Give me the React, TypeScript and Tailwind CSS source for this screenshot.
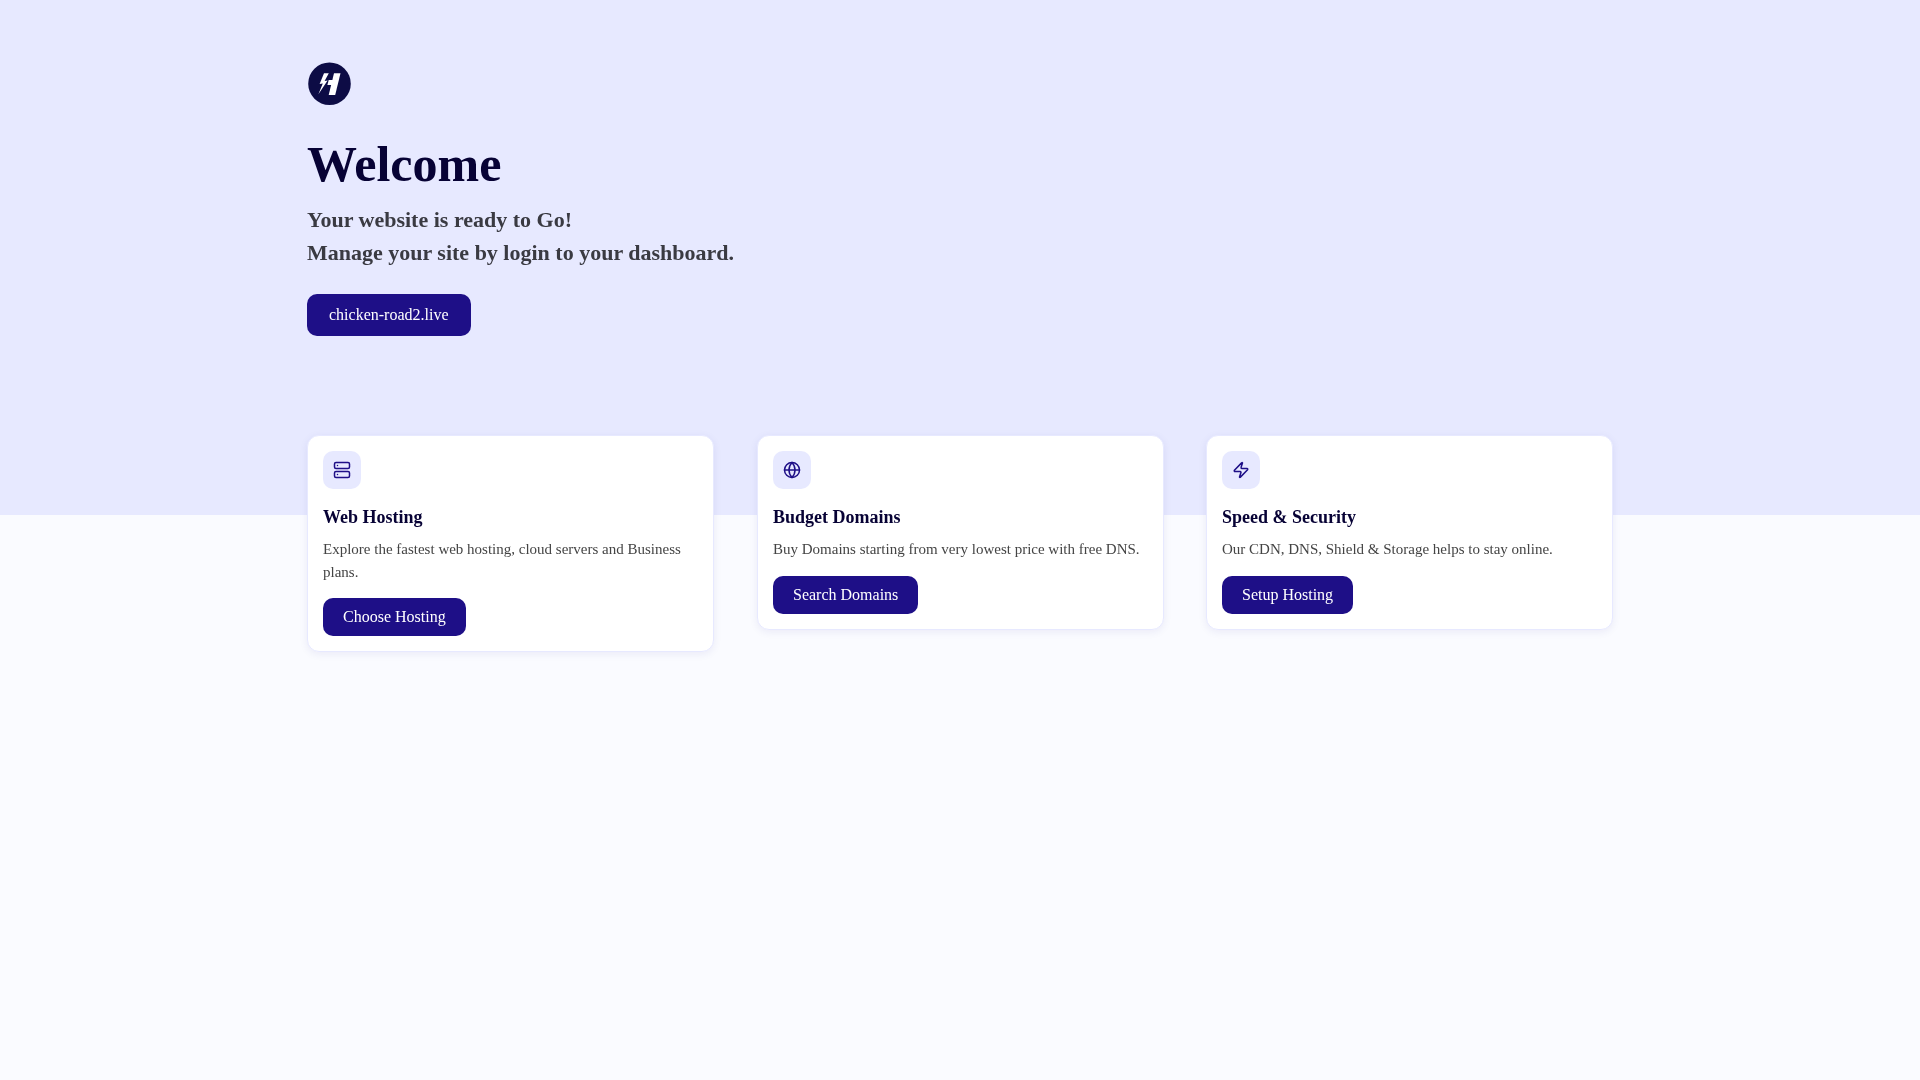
import { Globe, Server, Zap } from "lucide-react";
import React from "react";

const cards = [
  {
    icon: Server,
    title: "Web Hosting",
    text: "Explore the fastest web hosting, cloud servers and Business plans.",
    button: "Choose Hosting",
  },
  {
    icon: Globe,
    title: "Budget Domains",
    text: "Buy Domains starting from very lowest price with free DNS.",
    button: "Search Domains",
  },
  {
    icon: Zap,
    title: "Speed & Security",
    text: "Our CDN, DNS, Shield & Storage helps to stay online.",
    button: "Setup Hosting",
  },
];

function Logo() {
  return (
    <svg width="44" height="44" viewBox="0 0 44 44" className="block">
      <circle cx="22.5" cy="21.7" r="21.3" fill="#0d0c45" />
      <path d="M27 11.3h6.5L28.2 33h-6.5z" fill="#fff" />
      <path d="M21.7 18h6.2l-1.3 5h-6.2z" fill="#fff" />
      <path d="M17 11.3L12.6 22l3.2-.6-4.4 10.8 9.2-13.6-3 .5 4.2-7.8z" fill="#fff" />
    </svg>
  );
}

function App() {
  return (
    <div className="min-h-[1080px] bg-[#fafbff] font-['Liberation_Serif',serif]">
      <div className="h-[515px] bg-[#e7e9ff]">
        <div className="mx-auto w-[1306px] pt-[62px]">
          <Logo />
          <h1 className="mt-[27px] text-[50px] font-bold leading-[62px] text-[#070235] will-change-transform">
            Welcome
          </h1>
          <p className="mt-[8px] text-[22px] font-bold leading-[33px] text-[#3a3a42] will-change-transform">
            Your website is ready to Go!
            <br />
            Manage your site by login to your dashboard.
          </p>
          <button className="mt-[25px] h-[42px] rounded-[10px] bg-[#1e0f87] px-[22px] text-base text-white will-change-transform">
            chicken-road2.live
          </button>
        </div>
      </div>
      <div className="mx-auto -mt-[80px] grid w-[1306px] grid-cols-3 items-start gap-[43px]">
        {cards.map((card) => (
          <div
            key={card.title}
            className="rounded-[12px] border border-[#e7e9ff] bg-white p-[15px] shadow-[0_2px_8px_rgba(30,15,135,0.07)] will-change-transform"
          >
            <div className="flex h-[38px] w-[38px] items-center justify-center rounded-[10px] bg-[#e7e9ff]">
              <card.icon className="h-[18px] w-[18px] text-[#1e0f87]" strokeWidth={2} />
            </div>
            <h3 className="mt-[15px] text-lg font-bold leading-[27px] text-[#070235]">{card.title}</h3>
            <p className="mt-[7px] text-[15px] leading-[22.5px] text-[#444444]">{card.text}</p>
            <button className="mt-[15px] block h-[38px] rounded-[10px] bg-[#1e0f87] px-[20px] text-base text-white">
              {card.button}
            </button>
          </div>
        ))}
      </div>
    </div>
  );
}

export default App;
